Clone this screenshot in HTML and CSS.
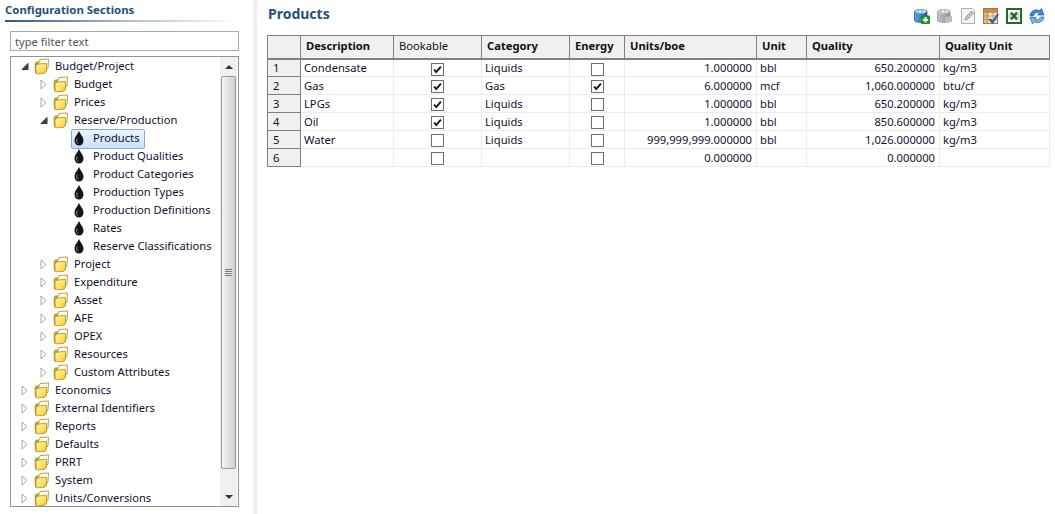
FILE: index.html
```html
<!DOCTYPE html>
<html lang="en">
<head>
    <meta charset="UTF-8">
    <title>Products</title>
    <link rel="stylesheet" href="styles.css">
</head>
<body>

<svg class="defs" width="0" height="0">
    <defs>
        <linearGradient id="folderFill" x1="0" y1="0" x2="1" y2="1">
            <stop offset="0" stop-color="#fff7a8"/>
            <stop offset="0.6" stop-color="#fde05e"/>
            <stop offset="1" stop-color="#f0bc2c"/>
        </linearGradient>
        <linearGradient id="barrel" x1="0" y1="0" x2="1" y2="0">
            <stop offset="0" stop-color="#5fa4de"/>
            <stop offset="1" stop-color="#1c5f9e"/>
        </linearGradient>
        <linearGradient id="barrelOff" x1="0" y1="0" x2="1" y2="0">
            <stop offset="0" stop-color="#c4c4c4"/>
            <stop offset="1" stop-color="#8e8e8e"/>
        </linearGradient>
        <symbol id="folder" viewBox="0 0 17 17">
            <path d="M2 6 L2.5 15 L5 15.5 L6 4 L3 4 Z" fill="#d8a62a" stroke="#a88020" stroke-width="0.7"/>
            <path d="M5.5 5 L7 1.5 L15.5 1 L15 10 L12 13 L6 13 Z" fill="#fffbe6" stroke="#a8862a" stroke-width="0.8"/>
            <path d="M3 7 C5 5.8 9 5.6 13.5 5.5 L13.5 13 C13 14.5 12 15.5 10 15.5 L4.5 15.8 C3.5 15.8 3 15 3 14 Z" fill="url(#folderFill)" stroke="#b08a22" stroke-width="0.8"/>
        </symbol>
        <symbol id="drop" viewBox="0 0 12 16">
            <path d="M6 0.5 C6.5 3.5 10.5 6.5 10.5 10.5 C10.5 13.5 8.6 15.5 6 15.5 C3.4 15.5 1.5 13.5 1.5 10.5 C1.5 6.5 5.5 3.5 6 0.5 Z" fill="#151515"/>
            <path d="M4.2 8.5 C3.4 10.5 3.4 12 4.8 13.5" fill="none" stroke="#909090" stroke-width="1"/>
        </symbol>
        <symbol id="closed" viewBox="0 0 9 11">
            <path d="M2 1 L7 5.5 L2 10 Z" fill="#fff" stroke="#a6a6a6"/>
        </symbol>
        <symbol id="open" viewBox="0 0 9 11">
            <path d="M8 2.5 L8 8.5 L2 8.5 Z" fill="#444" stroke="#333"/>
        </symbol>
        <symbol id="check" viewBox="0 0 13 13">
            <path d="M2.5 6.5 L5 9.5 L10.5 3" fill="none" stroke="#111" stroke-width="2.2"/>
        </symbol>
    </defs>
</svg>

<div class="page">
    <aside class="sidebar">
        <div class="sidebar-title">Configuration Sections</div>
        <div class="title-rule"></div>
        <input class="filter" type="text" placeholder="type filter text">
        <div class="tree-box">
            <ul class="tree">
                <li class="node d0"><svg class="twist"><use href="#open"/></svg><svg class="ico"><use href="#folder"/></svg><span>Budget/Project</span></li>
                <li class="node d1"><svg class="twist"><use href="#closed"/></svg><svg class="ico"><use href="#folder"/></svg><span>Budget</span></li>
                <li class="node d1"><svg class="twist"><use href="#closed"/></svg><svg class="ico"><use href="#folder"/></svg><span>Prices</span></li>
                <li class="node d1"><svg class="twist"><use href="#open"/></svg><svg class="ico"><use href="#folder"/></svg><span>Reserve/Production</span></li>
                <li class="node leaf selected"><svg class="drop"><use href="#drop"/></svg><span>Products</span></li>
                <li class="node leaf"><svg class="drop"><use href="#drop"/></svg><span>Product Qualities</span></li>
                <li class="node leaf"><svg class="drop"><use href="#drop"/></svg><span>Product Categories</span></li>
                <li class="node leaf"><svg class="drop"><use href="#drop"/></svg><span>Production Types</span></li>
                <li class="node leaf"><svg class="drop"><use href="#drop"/></svg><span>Production Definitions</span></li>
                <li class="node leaf"><svg class="drop"><use href="#drop"/></svg><span>Rates</span></li>
                <li class="node leaf"><svg class="drop"><use href="#drop"/></svg><span>Reserve Classifications</span></li>
                <li class="node d1"><svg class="twist"><use href="#closed"/></svg><svg class="ico"><use href="#folder"/></svg><span>Project</span></li>
                <li class="node d1"><svg class="twist"><use href="#closed"/></svg><svg class="ico"><use href="#folder"/></svg><span>Expenditure</span></li>
                <li class="node d1"><svg class="twist"><use href="#closed"/></svg><svg class="ico"><use href="#folder"/></svg><span>Asset</span></li>
                <li class="node d1"><svg class="twist"><use href="#closed"/></svg><svg class="ico"><use href="#folder"/></svg><span>AFE</span></li>
                <li class="node d1"><svg class="twist"><use href="#closed"/></svg><svg class="ico"><use href="#folder"/></svg><span>OPEX</span></li>
                <li class="node d1"><svg class="twist"><use href="#closed"/></svg><svg class="ico"><use href="#folder"/></svg><span>Resources</span></li>
                <li class="node d1"><svg class="twist"><use href="#closed"/></svg><svg class="ico"><use href="#folder"/></svg><span>Custom Attributes</span></li>
                <li class="node d0"><svg class="twist"><use href="#closed"/></svg><svg class="ico"><use href="#folder"/></svg><span>Economics</span></li>
                <li class="node d0"><svg class="twist"><use href="#closed"/></svg><svg class="ico"><use href="#folder"/></svg><span>External Identifiers</span></li>
                <li class="node d0"><svg class="twist"><use href="#closed"/></svg><svg class="ico"><use href="#folder"/></svg><span>Reports</span></li>
                <li class="node d0"><svg class="twist"><use href="#closed"/></svg><svg class="ico"><use href="#folder"/></svg><span>Defaults</span></li>
                <li class="node d0"><svg class="twist"><use href="#closed"/></svg><svg class="ico"><use href="#folder"/></svg><span>PRRT</span></li>
                <li class="node d0"><svg class="twist"><use href="#closed"/></svg><svg class="ico"><use href="#folder"/></svg><span>System</span></li>
                <li class="node d0"><svg class="twist"><use href="#closed"/></svg><svg class="ico"><use href="#folder"/></svg><span>Units/Conversions</span></li>
            </ul>
            <div class="scrollbar">
                <div class="arrow up"></div>
                <div class="thumb"><div class="grip"></div></div>
                <div class="arrow down"></div>
            </div>
        </div>
    </aside>

    <div class="divider"></div>

    <main class="content">
        <div class="content-head">
            <h1>Products</h1>
            <div class="toolbar">
                <svg class="tool" viewBox="0 0 16 16">
                    <path d="M0.5 3.5 C0.5 1 13 1 13 3.5 L13 12.5 C13 15 0.5 15 0.5 12.5 Z" fill="url(#barrel)" stroke="#1d4f80" stroke-width="0.7"/>
                    <ellipse cx="6.8" cy="3.5" rx="5.6" ry="2" fill="#cfe2f3" stroke="#6b9ac4" stroke-width="0.6"/>
                    <path d="M3 2.8 L5 4.2 M7 2.5 L9 4.2" stroke="#5a7f9e" stroke-width="0.8"/>
                    <rect x="7" y="7.5" width="9" height="8.5" rx="1" fill="#1f8a32"/>
                    <path d="M11.5 9 L11.5 14.5 M8.8 11.8 L14.2 11.8" stroke="#d9f7c8" stroke-width="2.2"/>
                </svg>
                <svg class="tool" viewBox="0 0 16 16">
                    <path d="M0.5 3.5 C0.5 1 13 1 13 3.5 L13 12.5 C13 15 0.5 15 0.5 12.5 Z" fill="url(#barrelOff)" stroke="#8a8a8a" stroke-width="0.7"/>
                    <ellipse cx="6.8" cy="3.5" rx="5.6" ry="2" fill="#e6e6e6" stroke="#aaa" stroke-width="0.6"/>
                    <path d="M3 2.8 L5 4.2 M7 2.5 L9 4.2" stroke="#8f8f8f" stroke-width="0.8"/>
                    <path d="M8 9 L15 8 L15 14 L8 15 Z" fill="#bdbdbd"/>
                </svg>
                <svg class="tool" viewBox="0 0 16 16">
                    <path d="M1.5 0.5 L12.5 0.5 L14.5 2.5 L14.5 15.5 L1.5 15.5 Z" fill="#f4f4f4" stroke="#b0b0b0"/>
                    <path d="M5 12 L6 9 L11.5 3 L13.5 5 L8 11 Z" fill="#c6c6c6" stroke="#8a8a8a" stroke-width="0.8"/>
                </svg>
                <svg class="tool" viewBox="0 0 16 16">
                    <rect x="0.5" y="0.5" width="14" height="15" fill="#fbe8c4" stroke="#9a7a58"/>
                    <rect x="1" y="1" width="13" height="3" fill="#e08a2e"/>
                    <rect x="1" y="4" width="4" height="11" fill="#f0b66a"/>
                    <path d="M0.5 4.5 L14.5 4.5 M0.5 8 L14.5 8 M0.5 11.5 L14.5 11.5 M5 0.5 L5 15.5 M10 0.5 L10 15.5" stroke="#a98a68" stroke-width="0.8"/>
                    <path d="M6.5 11 L9.5 14.5 L15 6" fill="none" stroke="#2a62b8" stroke-width="2.2"/>
                </svg>
                <svg class="tool" viewBox="0 0 16 16">
                    <rect x="1" y="1" width="14" height="14" fill="#fff" stroke="#1d6b2c" stroke-width="2"/>
                    <rect x="3" y="5" width="10" height="6" fill="#bcdcbc"/>
                    <path d="M5 4.5 L11 11.5 M11 4.5 L5 11.5" stroke="#17692a" stroke-width="2.2"/>
                </svg>
                <svg class="tool" viewBox="0 0 16 16">
                    <path d="M1 8 C1 3.5 6 0.5 10.5 2.5 L12.5 0.5 L15 7 L8.5 7 L10.5 5 C7.5 3.8 5 5.5 4.5 8 Z" fill="#3a86d0" stroke="#1f5f9e" stroke-width="0.7"/>
                    <path d="M15 9 C15 13 10 15.8 5.5 13.8 L3.5 15.8 L1 9.5 L7.5 9.5 L5.5 11.5 C8.5 12.5 11 11 11.5 9 Z" fill="#78b8ee" stroke="#1f5f9e" stroke-width="0.7"/>
                </svg>
            </div>
        </div>

        <table class="grid">
            <colgroup>
                <col class="c-row"><col class="c-desc"><col class="c-book"><col class="c-cat"><col class="c-energy">
                <col class="c-units"><col class="c-unit"><col class="c-qual"><col class="c-qunit">
            </colgroup>
            <thead>
                <tr>
                    <th></th>
                    <th>Description</th>
                    <th class="plain">Bookable</th>
                    <th>Category</th>
                    <th>Energy</th>
                    <th>Units/boe</th>
                    <th>Unit</th>
                    <th>Quality</th>
                    <th>Quality Unit</th>
                </tr>
            </thead>
            <tbody>
                <tr>
                    <td class="rownum">1</td><td>Condensate</td>
                    <td class="mid"><span class="box"><svg><use href="#check"/></svg></span></td>
                    <td>Liquids</td>
                    <td class="mid"><span class="box"></span></td>
                    <td class="num">1.000000</td><td>bbl</td><td class="num">650.200000</td><td>kg/m3</td>
                </tr>
                <tr>
                    <td class="rownum">2</td><td>Gas</td>
                    <td class="mid"><span class="box"><svg><use href="#check"/></svg></span></td>
                    <td>Gas</td>
                    <td class="mid"><span class="box"><svg><use href="#check"/></svg></span></td>
                    <td class="num">6.000000</td><td>mcf</td><td class="num">1,060.000000</td><td>btu/cf</td>
                </tr>
                <tr>
                    <td class="rownum">3</td><td>LPGs</td>
                    <td class="mid"><span class="box"><svg><use href="#check"/></svg></span></td>
                    <td>Liquids</td>
                    <td class="mid"><span class="box"></span></td>
                    <td class="num">1.000000</td><td>bbl</td><td class="num">650.200000</td><td>kg/m3</td>
                </tr>
                <tr>
                    <td class="rownum">4</td><td>Oil</td>
                    <td class="mid"><span class="box"><svg><use href="#check"/></svg></span></td>
                    <td>Liquids</td>
                    <td class="mid"><span class="box"></span></td>
                    <td class="num">1.000000</td><td>bbl</td><td class="num">850.600000</td><td>kg/m3</td>
                </tr>
                <tr>
                    <td class="rownum">5</td><td>Water</td>
                    <td class="mid"><span class="box"></span></td>
                    <td>Liquids</td>
                    <td class="mid"><span class="box"></span></td>
                    <td class="num">999,999,999.000000</td><td>bbl</td><td class="num">1,026.000000</td><td>kg/m3</td>
                </tr>
                <tr>
                    <td class="rownum">6</td><td></td>
                    <td class="mid"><span class="box"></span></td>
                    <td></td>
                    <td class="mid"><span class="box"></span></td>
                    <td class="num">0.000000</td><td></td><td class="num">0.000000</td><td></td>
                </tr>
            </tbody>
        </table>
    </main>
</div>

</body>
</html>
```

FILE: styles.css
```css
* {
    box-sizing: border-box;
}

html, body {
    margin: 0;
    height: 100%;
    overflow: hidden;
    background-color: #fff;
}

body {
    font-family: "Noto Sans", Tahoma, sans-serif;
    font-size: 11.2px;
    color: #111;
}

.defs {
    display: block;
    height: 0;
}

.page {
    display: flex;
    height: 514px;
}

.sidebar {
    width: 253px;
    flex: none;
    padding: 2px 14px 0 5px;
    display: flex;
    flex-direction: column;
}

.sidebar-title {
    height: 18px;
    line-height: 16px;
    font-size: 11.4px;
    font-weight: bold;
    color: #24517d;
}

.title-rule {
    height: 2px;
    width: 237px;
    margin-bottom: 9px;
    background: linear-gradient(to right, #2a5a8c, #a9bdd2 50%, #fff);
}

.filter {
    width: 229px;
    height: 20px;
    margin: 0 0 5px 5px;
    padding: 0 4px;
    flex: none;
    border: 1px solid #a9a9a9;
    font: inherit;
    outline: none;
}

.filter::placeholder {
    color: #555;
    opacity: 1;
}

.tree-box {
    width: 229px;
    height: 451px;
    margin-left: 5px;
    border: 1px solid #8f949b;
    display: flex;
    overflow: hidden;
}

.tree {
    flex: 1;
    list-style: none;
    margin: 0;
    padding: 0;
    overflow: hidden;
}

.node {
    height: 18px;
    display: flex;
    align-items: center;
    white-space: nowrap;
    color: #101030;
}

.d0 {
    padding-left: 9px;
}

.d1 {
    padding-left: 28px;
}

.leaf {
    padding-left: 62px;
}

.twist {
    width: 9px;
    height: 11px;
    flex: none;
    margin-right: 4px;
}

.ico {
    width: 17px;
    height: 17px;
    flex: none;
    margin-right: 5px;
}

.drop {
    width: 12px;
    height: 16px;
    flex: none;
    margin-right: 8px;
}

.node span {
    line-height: 17px;
    padding-bottom: 1px;
}

.selected {
    position: relative;
}

/* selection pill sits behind the drop and label */
.selected::before {
    content: "";
    position: absolute;
    left: 60px;
    top: 0;
    width: 72px;
    height: 18px;
    border: 1px solid #84acdd;
    border-radius: 2px;
    background: linear-gradient(to bottom, #eef5fd, #c9e0f8);
}

.selected svg, .selected span {
    position: relative;
}

.scrollbar {
    width: 17px;
    flex: none;
    margin-right: 1px;
    background-color: #f0f0f0;
    display: flex;
    flex-direction: column;
}

.arrow {
    height: 19px;
    flex: none;
    display: flex;
    align-items: center;
    justify-content: center;
}

.arrow::before {
    content: "";
    border-left: 4px solid transparent;
    border-right: 4px solid transparent;
}

.arrow.up::before {
    border-bottom: 4px solid #333;
}

.arrow.down {
    margin-top: auto;
}

.arrow.down::before {
    border-top: 4px solid #333;
}

.thumb {
    height: 393px;
    margin: 0 1px;
    border: 1px solid #9a9a9a;
    border-radius: 2px;
    background: linear-gradient(to right, #f4f4f4, #e2e2e2 50%, #cfcfcf);
    display: flex;
    align-items: center;
    justify-content: center;
}

.grip {
    width: 7px;
    height: 7px;
    background: repeating-linear-gradient(to bottom, #777 0, #777 1px, #eee 1px, #eee 2px);
}

.divider {
    width: 4px;
    flex: none;
    background-color: #f0f0f0;
}

.content {
    flex: 1;
    padding: 0 6px 0 10px;
}

.content-head {
    height: 35px;
    display: flex;
    justify-content: space-between;
    padding-top: 4px;
}

h1 {
    margin: 0 0 0 1px;
    font-size: 14px;
    line-height: 20px;
    color: #24517d;
}

.toolbar {
    display: flex;
    gap: 7px;
    padding-top: 4px;
    padding-right: 5px;
}

.tool {
    width: 16px;
    height: 16px;
}

.grid {
    width: 782px;
    table-layout: fixed;
    border-collapse: collapse;
}

.c-row { width: 33px; }
.c-desc { width: 93px; }
.c-book { width: 88px; }
.c-cat { width: 88px; }
.c-energy { width: 55px; }
.c-units { width: 132px; }
.c-unit { width: 50px; }
.c-qual { width: 133px; }
.c-qunit { width: 110px; }

.grid th {
    height: 23px;
    padding: 0 5px 2px;
    text-align: left;
    font-weight: bold;
    background-color: #f0f0f0;
    border: 1px solid #808080;
    border-bottom-width: 2px;
    white-space: nowrap;
}

.grid th.plain {
    font-weight: normal;
}

.grid td {
    height: 18px;
    padding: 0 4px 0 3px;
    border: 1px solid #ececec;
    white-space: nowrap;
    color: #101030;
}

.grid td.rownum {
    padding-left: 5px;
    background-color: #f0f0f0;
    border: 1px solid #808080;
    color: #111;
}

.grid td.num {
    text-align: right;
}

.grid td.mid {
    text-align: center;
    padding: 0;
}

.box {
    display: inline-block;
    width: 13px;
    height: 13px;
    vertical-align: middle;
    border: 1px solid #707060;
    background-color: #fff;
}

.box svg {
    display: block;
    width: 11px;
    height: 11px;
}
```
